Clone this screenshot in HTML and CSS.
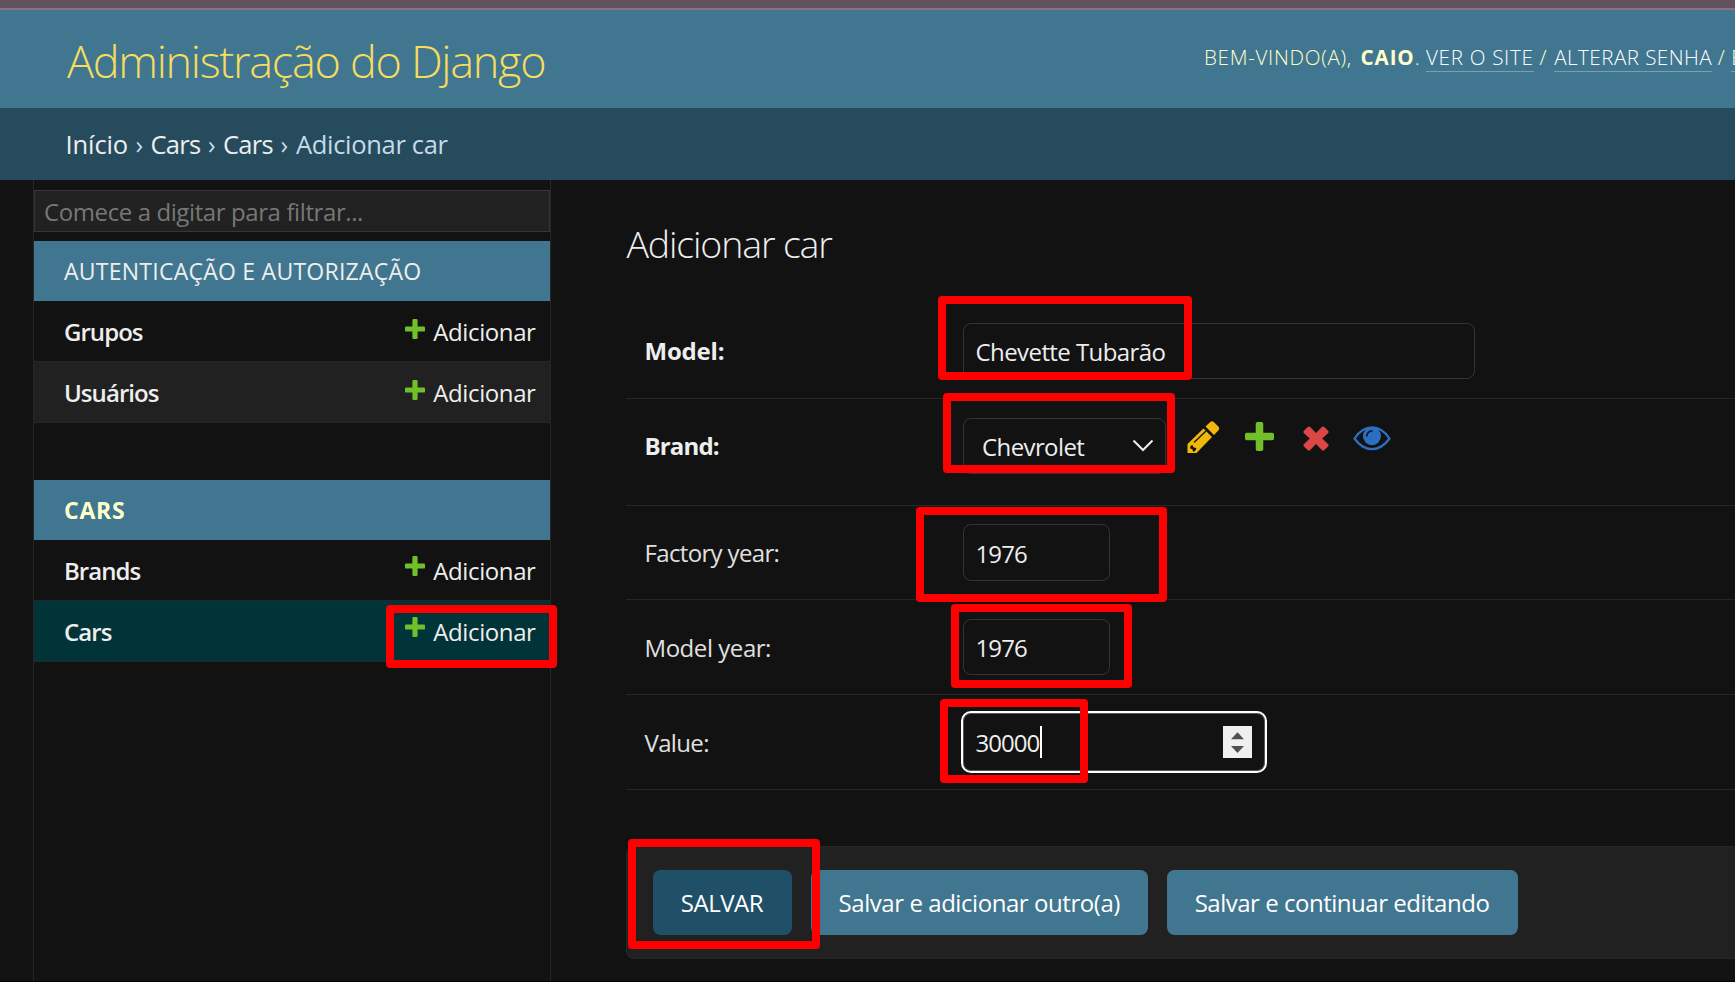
FILE: index.html
```html
<!DOCTYPE html>
<html lang="pt-br">
<head>
<meta charset="utf-8">
<title>Adicionar car | Administração do Django</title>
<link rel="stylesheet" href="styles.css">
</head>
<body>
<svg width="0" height="0" class="defs">
  <symbol id="plus" viewBox="0 0 20 20"><path fill="#70bf2b" d="M8.6 0h2.8q1.2 0 1.2 1.2v6.2h6.2q1.2 0 1.2 1.2v2.8q0 1.2-1.2 1.2h-6.2v6.2q0 1.2-1.2 1.2H8.6q-1.2 0-1.2-1.2v-6.2H1.200q-1.200 0-1.200-1.200V8.600q0-1.200 1.200-1.200h6.200V1.200Q7.400 0 8.600 0z"/></symbol>
</svg>
<div class="strip"></div>
<header class="header">
  <h1 class="brand">Administração do Django</h1>
  <div class="tools">
    <span>BEM-VINDO(A),</span><span><b>CAIO</b>.</span><span><a class="link">VER O SITE</a></span><span>/</span><span><a class="link pass">ALTERAR SENHA</a></span><span>/</span><span><a class="link">ENCERRAR SESSÃO</a></span>
  </div>
</header>
<nav class="crumbs">
  <a class="home">Início</a><span>›</span><a>Cars</a><span>›</span><a>Cars</a><span>›</span><span class="here">Adicionar car</span>
</nav>
<div class="main">
  <aside class="sidebar">
    <div class="filter">Comece a digitar para filtrar...</div>
    <section class="module">
      <h2 class="caption">AUTENTICAÇÃO E AUTORIZAÇÃO</h2>
      <div class="row"><b>Grupos</b><a class="add"><svg class="p"><use href="#plus"/></svg>Adicionar</a></div>
      <div class="row alt"><b>Usuários</b><a class="add"><svg class="p"><use href="#plus"/></svg>Adicionar</a></div>
    </section>
    <section class="module">
      <h2 class="caption current">CARS</h2>
      <div class="row cars-app"><b>Brands</b><a class="add"><svg class="p"><use href="#plus"/></svg>Adicionar</a></div>
      <div class="row cars-app selected"><b>Cars</b><a class="add"><svg class="p"><use href="#plus"/></svg>Adicionar</a></div>
    </section>
  </aside>
  <main class="content">
    <h1 class="title">Adicionar car</h1>
    <div class="field"><label class="req model">Model:</label><div class="input wide">Chevette Tubarão</div></div>
    <div class="field related"><label class="req">Brand:</label>
      <div class="input select">Chevrolet<svg class="chev" width="22" height="13" viewBox="0 0 22 13"><path d="M1.500 1.500L11 11l9.500-9.500" fill="none" stroke="#eee" stroke-width="2"/></svg></div>
      <div class="icons">
        <svg class="pencil" width="33" height="33" viewBox="0 0 33 33"><path fill="#efb80b" d="M16.500 7.500l8.500 8.500L9.500 32H.5v-9zM18.500 5.500L23 1.200q2-1.800 4 0l4.300 4.300q1.800 2 0 4L27 14z"/><path d="M7 21.500L19 10" stroke="#121212" stroke-width="1.300"/><path d="M3.200 25.500l2-1.800 1.300 2.600 3 1-1.600 3-2 .2-.4-2.300-2.300-.7z" fill="#121212"/></svg>
        <svg class="plus" width="29" height="29"><use href="#plus"/></svg>
        <svg class="cross" width="26" height="25" viewBox="0 0 27 26"><path fill="#dd4646" d="M1 5L4.800 1q1.300-1.200 2.600 0l6.100 6.200L19.600 1q1.300-1.200 2.600 0L26 5q1.200 1.200 0 2.500L20 13l6 5.700q1.200 1.200 0 2.500L22.200 25q-1.300 1.200-2.600 0l-6.100-6.200L7.400 25q-1.300 1.200-2.600 0L1 21.200q-1.200-1.200 0-2.500L7 13 1 7.500Q-.2 6.200 1 5z"/></svg>
        <svg class="eye" width="38" height="25" viewBox="0 0 39 26"><path d="M1.300 13Q9 1.500 19.500 1.500T37.700 13Q30 24 19.500 24T1.300 13z" fill="none" stroke="#2b70c0" stroke-width="2.300"/><circle cx="19.500" cy="10.500" r="9.400" fill="#2b70c0"/><path d="M14 11q.2-5.500 6-6" fill="none" stroke="#121212" stroke-width="1.700"/></svg>
      </div>
    </div>
    <div class="field factory"><label>Factory year:</label><div class="input year">1976</div></div>
    <div class="field"><label class="myear">Model year:</label><div class="input year">1976</div></div>
    <div class="field"><label>Value:</label><div class="input value"><span class="typed">30000</span><svg class="spin" width="29" height="32" viewBox="0 0 29 32"><path fill="#efefef" d="M0 0h29v32H0z"/><path fill="#505050" d="M8 13.300l6.500-7 6.500 7zM8 20h13l-6.500 7z"/></svg></div></div>
    <div class="submit">
      <a class="btn save">SALVAR</a><a class="btn another">Salvar e adicionar outro(a)</a><a class="btn continue">Salvar e continuar editando</a>
    </div>
  </main>
</div>
<i class="mark m-add"></i><i class="mark m-model"></i><i class="mark m-brand"></i><i class="mark m-factory"></i><i class="mark m-year"></i><i class="mark m-value"></i><i class="mark m-save"></i>
</body>
</html>
```
FILE: styles.css
```css
* { box-sizing: border-box; }
body {
  margin: 0;
  width: 1735px;
  height: 982px;
  overflow: hidden;
  position: relative;
  display: flex;
  flex-direction: column;
  background: #121212;
  color: #eee;
  font: 24px/28px "Open Sans", "Noto Sans", sans-serif;
  letter-spacing: -0.6px;
  border-bottom: 1px solid #030303;
  white-space: nowrap;
}
h1, h2 { margin: 0; }
svg { display: block; flex: none; }
.defs { position: absolute; }
.strip { height: 10px; flex: none; background: #62515d; border-bottom: 2px solid #8b717f; }

.header { height: 98px; flex: none; display: flex; background: #417690; overflow: hidden; }
.brand {
  width: 1204px;
  flex: none;
  padding: 3px 0 0 67px;
  font-weight: 300;
  font-size: 45px;
  line-height: 96px;
  letter-spacing: -1.3px;
  color: #f5dd5d;
}
.tools {
  flex: none;
  display: grid;
  grid-template-columns: 156.500px 65.500px 113.500px 14.800px 163.500px 13.500px 200px;
  padding-top: 33px;
  font-weight: 300;
  font-size: 20.6px;
  letter-spacing: 0.7px;
  color: #ffc;
}
.tools b { font-weight: 700; letter-spacing: 0.9px; }
.tools .link {
  display: inline-block;
  line-height: 27px;
  border-bottom: 1px solid #7a9fb1;
  color: #fff;
}
.tools .pass { letter-spacing: 0.45px; }

.crumbs {
  height: 72px;
  flex: none;
  padding-left: 65.5px;
  display: grid;
  grid-template-columns: 70px 15px 57.500px 15px 57.500px 15.500px auto;
  align-items: center;
  background: #264b5d;
  font-size: 25.5px;
  letter-spacing: -0.7px;
  color: #c4dce8;
}
.crumbs a { color: #eee; }
.crumbs .home { letter-spacing: -0.1px; }
.crumbs .here { letter-spacing: -0.32px; }

.main { flex: 1; display: flex; padding-left: 33px; }
.sidebar { width: 518px; flex: none; border: solid #272727; border-width: 0 1px; }
.filter {
  height: 42px;
  margin: 10px 0 9px;
  padding: 7px 9px;
  border: 1px solid #363636;
  background: #212121;
  color: #777;
  font-size: 24px;
  letter-spacing: -0.4px;
}
.module { margin-bottom: 57px; }
.caption {
  height: 60px;
  padding-left: 30px;
  background: #417690;
  font-weight: 400;
  font-size: 23px;
  line-height: 60px;
  letter-spacing: 0.25px;
}
.current { font-weight: 700; color: #ffc; letter-spacing: 0.8px; }
.row {
  height: 61px;
  padding: 1px 14.5px 0 30px;
  display: flex;
  align-items: center;
  justify-content: space-between;
  border-bottom: 1px solid #272727;
}
.row b { font-weight: 600; letter-spacing: -0.95px; }
.alt { background: #212121; }
.selected { background: #003438; }
.add { display: flex; align-items: center; gap: 8px; letter-spacing: -0.4px; }
.p { width: 20px; height: 20px; margin-bottom: 5px; }
.cars-app .p { margin-bottom: 9px; }

.content { flex: 1; padding: 38px 0 0 75px; min-width: 0; }
.title { height: 86px; padding-left: 0.5px; font-weight: 300; font-size: 37.5px; line-height: 51px; letter-spacing: -1.15px; }
.field { height: 95px; padding: 19px 0 0 18.5px; display: flex; border-bottom: 1px solid #272727; }
.field label { width: 318.5px; flex: none; line-height: 58px; color: #e0e0e0; letter-spacing: -0.65px; }
.field .req { line-height: 56px; font-weight: 700; letter-spacing: -0.85px; color: #eee; }
.field .model { letter-spacing: -0.2px; }
.field .myear { letter-spacing: -0.45px; }
.related { height: 107px; }
.factory { height: 94px; padding-top: 18px; }
.factory .input { height: 57px; }
.input {
  height: 56px;
  padding: 1px 11.5px 0;
  display: flex;
  align-items: center;
  border: 1px solid #343434;
  border-radius: 8px;
}
.wide { width: 512px; letter-spacing: -0.58px; }
.select { width: 202.5px; padding: 1px 11px 0 18px; justify-content: space-between; }
.chev { margin-bottom: 2px; }
.input.year { width: 147px; padding-top: 2px; letter-spacing: -0.9px; }
.field .value {
  width: 302px;
  height: 58px;
  margin-top: -1px;
  padding: 0 12px 0 11.5px;
  justify-content: space-between;
  outline: 2px solid #fff;
  outline-offset: 0;
  border-color: #555;
  letter-spacing: -0.95px;
}
.typed { height: 32px; line-height: 34px; border-right: 2px solid #fff; padding-right: 1px; }
.icons { display: flex; margin: 3px 0 0 21.5px; gap: 26px; height: 33px; }
.icons .plus { margin-top: 1px; margin-left: -1px; }
.icons .cross { margin: 4.5px 0 0 3px; }
.icons .eye { margin: 4.5px 0 0 -2.5px; }

.submit {
  height: 113px;
  margin-top: 56px;
  padding: 23px 25.5px;
  display: flex;
  background: #212121;
  border: 1px solid #272727;
  border-right: 0;
  border-radius: 8px 0 0 8px;
}
.btn {
  height: 65px;
  flex: none;
  line-height: 65px;
  text-align: center;
  border-radius: 7.5px;
  background: #417690;
  color: #fff;
  letter-spacing: -0.48px;
}
.save { width: 139px; background: #205067; }
.another { width: 336.5px; margin: 0 19px 0 19.5px; letter-spacing: -0.44px; }
.continue { width: 351px; }

/* Highlight frames drawn over the form */
.mark { position: absolute; border: 8px solid #f00; border-radius: 4px; }
.m-add { left: 385.5px; top: 605px; width: 171px; height: 63px; }
.m-model { left: 937.5px; top: 296px; width: 254px; height: 83.500px; }
.m-brand { left: 942.5px; top: 393px; width: 232px; height: 80px; }
.m-factory { left: 915.5px; top: 507px; width: 251px; height: 95px; }
.m-year { left: 950.5px; top: 604px; width: 181px; height: 84px; }
.m-value { left: 939.5px; top: 699px; width: 148px; height: 84px; }
.m-save { left: 627.5px; top: 839px; width: 192px; height: 110px; }
```
